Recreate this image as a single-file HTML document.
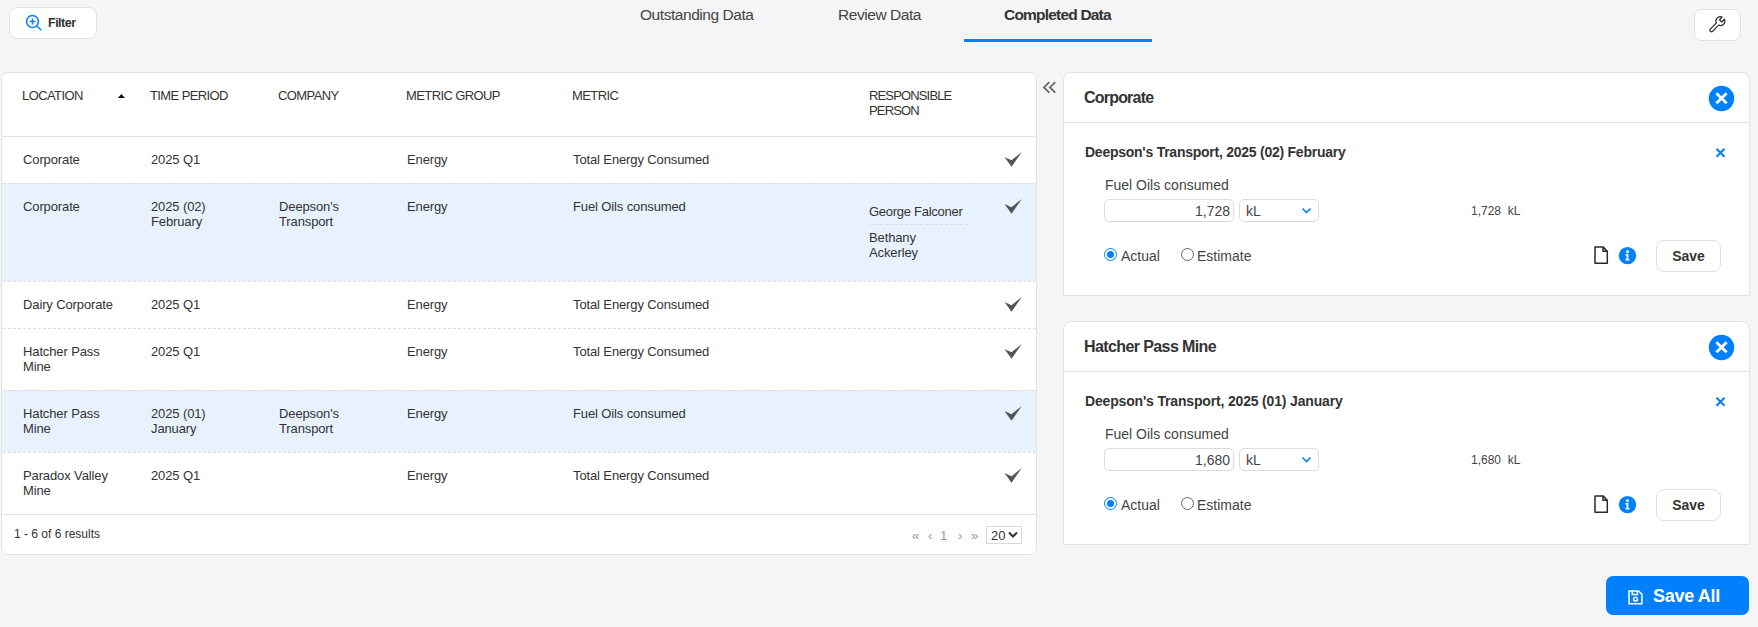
<!DOCTYPE html>
<html><head><meta charset="utf-8">
<style>
*{box-sizing:border-box;margin:0;padding:0}
html,body{width:1758px;height:627px;overflow:hidden;background:#f5f5f5;font-family:"Liberation Sans",sans-serif;color:#333;}
.abs{position:absolute}
.btn-w{position:absolute;background:#fff;border:1px solid #e2e2e2;border-radius:8px}
.tab{position:absolute;font-size:15.5px;line-height:16px;color:#444;white-space:nowrap;letter-spacing:-0.45px}
.card{position:absolute;background:#fff;border:1px solid #e3e3e3}
.th{position:absolute;font-size:13px;line-height:15px;color:#333;white-space:nowrap;letter-spacing:-0.6px}
.td{position:absolute;font-size:13px;line-height:15px;color:#333;white-space:nowrap;letter-spacing:-0.12px}
.dash{background-image:linear-gradient(to right,#dedede 3px,transparent 3px);background-size:5px 1px;background-position:1px 0}
.pg{position:absolute;font-size:13px;line-height:15px;color:#999}
.pcard{position:absolute;left:1063px;width:687px;height:224px;background:#fff;border:1px solid #e3e3e3;border-radius:8px 8px 0 0}
.ptitle{position:absolute;left:1084px;font-size:16px;line-height:18px;font-weight:bold;letter-spacing:-0.8px;color:#333;white-space:nowrap}
.sub{position:absolute;left:1085px;font-size:14px;line-height:16px;font-weight:bold;letter-spacing:-0.25px;color:#333;white-space:nowrap}
.lbl{position:absolute;left:1105px;font-size:14px;line-height:16px;color:#444;white-space:nowrap}
.inp{position:absolute;left:1104px;width:130px;height:23px;border:1px solid #dcdcdc;border-radius:5px;font-size:14px;line-height:23px;text-align:right;padding-right:3px;color:#444;background:#fff}
.sel{position:absolute;left:1239px;width:80px;height:23px;border:1px solid #dcdcdc;border-radius:5px;font-size:14px;line-height:23px;padding-left:6px;color:#444;background:#fff}
.val{position:absolute;left:1471px;font-size:12px;line-height:14px;color:#444;white-space:nowrap}
.radio{position:absolute;width:13px;height:13px;border-radius:50%;background:#fff}
.rlbl{position:absolute;font-size:14px;line-height:16px;color:#444;white-space:nowrap}
.save{position:absolute;left:1656px;width:65px;height:32px;border:1px solid #e0e0e0;border-radius:8px;font-size:14px;font-weight:bold;line-height:30px;text-align:center;color:#333;background:#fff}

</style></head>
<body>
<div class="btn-w" style="left:9px;top:7px;width:88px;height:32px"></div>
<svg class="abs" style="left:25px;top:14px" width="18" height="18" viewBox="0 0 18 18"><circle cx="7.5" cy="7.5" r="5.9" fill="none" stroke="#0080ff" stroke-width="1.5"/><path d="M7.5 4.6v5.8M4.6 7.5h5.8M11.7 11.7l4.6 4.6" stroke="#0080ff" stroke-width="1.5" fill="none"/></svg>
<div class="abs" style="left:48px;top:16px;font-size:12.5px;line-height:14px;font-weight:bold;color:#333;letter-spacing:-0.5px">Filter</div>
<div class="tab" style="left:640px;top:7px">Outstanding Data</div>
<div class="tab" style="left:838px;top:7px">Review Data</div>
<div class="tab" style="left:1004px;top:7px;font-weight:bold;color:#333;letter-spacing:-0.8px">Completed Data</div>
<div class="abs" style="left:964px;top:39px;width:188px;height:3px;background:#0080ff"></div>
<div class="btn-w" style="left:1694px;top:9px;width:47px;height:32px"></div>
<svg class="abs" style="left:1709px;top:16px" width="18" height="18" viewBox="0 0 18 18"><path d="M1.36 13.08L7.39 6.91A4.4 4.4 0 0 1 13.12 1.05L10.54 3.70L12.82 5.93L15.41 3.29A4.4 4.4 0 0 1 9.68 9.15L3.64 15.32A1.6 1.6 0 0 1 1.36 13.08Z" fill="none" stroke="#333" stroke-width="1.3" stroke-linejoin="round"/></svg>
<div class="card" style="left:1px;top:72px;width:1036px;height:483px;border-radius:7px"></div>
<div class="abs" style="left:2px;top:136px;width:1034px;height:1px;background:#e3e3e3"></div>
<div class="abs" style="left:2px;top:514px;width:1034px;height:1px;background:#e3e3e3"></div>
<div class="th" style="left:22px;top:88px">LOCATION</div>
<svg class="abs" style="left:117px;top:93px" width="9" height="6" viewBox="0 0 9 6"><path d="M0.8 5L4.4 1L8 5z" fill="#111"/></svg>
<div class="th" style="left:150px;top:88px">TIME PERIOD</div>
<div class="th" style="left:278px;top:88px">COMPANY</div>
<div class="th" style="left:406px;top:88px">METRIC GROUP</div>
<div class="th" style="left:572px;top:88px">METRIC</div>
<div class="th" style="left:869px;top:88px;letter-spacing:-0.85px">RESPONSIBLE<br>PERSON</div>
<div class="td" style="left:23px;top:152px">Corporate</div>
<div class="td" style="left:151px;top:152px">2025 Q1</div>
<div class="td" style="left:407px;top:152px">Energy</div>
<div class="td" style="left:573px;top:152px">Total Energy Consumed</div>
<svg class="abs" style="left:1004px;top:152px" width="19" height="16" viewBox="0 0 19 16"><path d="M0.5 5L7.5 8.2L17.8 0L7.5 14.8z" fill="#555"/></svg>
<div class="abs" style="left:2px;top:183px;width:1034px;height:98px;background:#e8f2ff"></div>
<div class="abs dash" style="left:2px;top:183px;width:1034px;height:1px"></div>
<div class="td" style="left:23px;top:199px">Corporate</div>
<div class="td" style="left:151px;top:199px">2025 (02)<br>February</div>
<div class="td" style="left:279px;top:199px">Deepson&#39;s<br>Transport</div>
<div class="td" style="left:407px;top:199px">Energy</div>
<div class="td" style="left:573px;top:199px">Fuel Oils consumed</div>
<svg class="abs" style="left:1004px;top:199px" width="19" height="16" viewBox="0 0 19 16"><path d="M0.5 5L7.5 8.2L17.8 0L7.5 14.8z" fill="#555"/></svg>
<div class="abs dash" style="left:2px;top:281px;width:1034px;height:1px"></div>
<div class="td" style="left:23px;top:297px">Dairy Corporate</div>
<div class="td" style="left:151px;top:297px">2025 Q1</div>
<div class="td" style="left:407px;top:297px">Energy</div>
<div class="td" style="left:573px;top:297px">Total Energy Consumed</div>
<svg class="abs" style="left:1004px;top:297px" width="19" height="16" viewBox="0 0 19 16"><path d="M0.5 5L7.5 8.2L17.8 0L7.5 14.8z" fill="#555"/></svg>
<div class="abs dash" style="left:2px;top:328px;width:1034px;height:1px"></div>
<div class="td" style="left:23px;top:344px">Hatcher Pass<br>Mine</div>
<div class="td" style="left:151px;top:344px">2025 Q1</div>
<div class="td" style="left:407px;top:344px">Energy</div>
<div class="td" style="left:573px;top:344px">Total Energy Consumed</div>
<svg class="abs" style="left:1004px;top:344px" width="19" height="16" viewBox="0 0 19 16"><path d="M0.5 5L7.5 8.2L17.8 0L7.5 14.8z" fill="#555"/></svg>
<div class="abs" style="left:2px;top:390px;width:1034px;height:62px;background:#e8f2ff"></div>
<div class="abs dash" style="left:2px;top:390px;width:1034px;height:1px"></div>
<div class="td" style="left:23px;top:406px">Hatcher Pass<br>Mine</div>
<div class="td" style="left:151px;top:406px">2025 (01)<br>January</div>
<div class="td" style="left:279px;top:406px">Deepson&#39;s<br>Transport</div>
<div class="td" style="left:407px;top:406px">Energy</div>
<div class="td" style="left:573px;top:406px">Fuel Oils consumed</div>
<svg class="abs" style="left:1004px;top:406px" width="19" height="16" viewBox="0 0 19 16"><path d="M0.5 5L7.5 8.2L17.8 0L7.5 14.8z" fill="#555"/></svg>
<div class="abs dash" style="left:2px;top:452px;width:1034px;height:1px"></div>
<div class="td" style="left:23px;top:468px">Paradox Valley<br>Mine</div>
<div class="td" style="left:151px;top:468px">2025 Q1</div>
<div class="td" style="left:407px;top:468px">Energy</div>
<div class="td" style="left:573px;top:468px">Total Energy Consumed</div>
<svg class="abs" style="left:1004px;top:468px" width="19" height="16" viewBox="0 0 19 16"><path d="M0.5 5L7.5 8.2L17.8 0L7.5 14.8z" fill="#555"/></svg>
<div class="td" style="left:869px;top:204px;letter-spacing:-0.27px">George Falconer</div>
<div class="abs dash" style="left:869px;top:224px;width:102px;height:1px"></div>
<div class="td" style="left:869px;top:230px">Bethany<br>Ackerley</div>
<div class="abs" style="left:14px;top:527px;font-size:12px;line-height:14px;color:#333">1 - 6 of 6 results</div>
<div class="pg" style="left:912px;top:528px">&laquo;</div>
<div class="pg" style="left:928px;top:528px">&lsaquo;</div>
<div class="pg" style="left:940px;top:528px">1</div>
<div class="pg" style="left:958px;top:528px">&rsaquo;</div>
<div class="pg" style="left:971px;top:528px">&raquo;</div>
<div class="abs" style="left:986px;top:526px;width:36px;height:18px;border:1px solid #d8d8d8;background:#fff"></div>
<div class="abs" style="left:991px;top:528px;font-size:13px;line-height:15px;color:#333">20</div>
<svg class="abs" style="left:1008px;top:531px" width="10" height="8" viewBox="0 0 10 8"><path d="M1 1.5L5 5.5L9 1.5" stroke="#333" stroke-width="2" fill="none"/></svg>
<svg class="abs" style="left:1042px;top:81px" width="15" height="13" viewBox="0 0 15 13"><path d="M7.3 1.2L1.9 6.4L7.3 11.6M13.3 1.2L7.9 6.4L13.3 11.6" stroke="#666" stroke-width="1.8" fill="none"/></svg>
<div class="pcard" style="top:72px"></div>
<div class="abs" style="left:1064px;top:122px;width:685px;height:1px;background:#e3e3e3"></div>
<div class="ptitle" style="top:89px">Corporate</div>
<svg class="abs" style="left:1708px;top:85px" width="27" height="27" viewBox="0 0 27 27"><circle cx="13.5" cy="13.5" r="12.7" fill="#0080ff"/><path d="M8.4 8.2L18.6 18.2M18.6 8.2L8.4 18.2" stroke="#fff" stroke-width="2.8"/></svg>
<div class="sub" style="top:144px">Deepson&#39;s Transport, 2025 (02) February</div>
<svg class="abs" style="left:1714px;top:147px" width="13" height="12" viewBox="0 0 13 12"><path d="M2.5 1.8L10.5 9.8M10.5 1.8L2.5 9.8" stroke="#0080ff" stroke-width="2"/></svg>
<div class="lbl" style="top:177px">Fuel Oils consumed</div>
<div class="inp" style="top:199px">1,728</div>
<div class="sel" style="top:199px">kL</div>
<svg class="abs" style="left:1301px;top:207px" width="11" height="8" viewBox="0 0 11 8"><path d="M1.5 1.5L5.5 5.5L9.5 1.5" stroke="#0080ff" stroke-width="1.6" fill="none"/></svg>
<div class="val" style="top:204px">1,728&nbsp; kL</div>
<div class="radio" style="left:1104px;top:248px;border:1.5px solid #0080ff"><div style="position:absolute;left:1.5px;top:1.5px;width:7px;height:7px;border-radius:50%;background:#0080ff"></div></div>
<div class="rlbl" style="left:1121px;top:248px">Actual</div>
<div class="radio" style="left:1181px;top:248px;border:1px solid #666"></div>
<div class="rlbl" style="left:1197px;top:248px">Estimate</div>
<svg class="abs" style="left:1593px;top:245px" width="16" height="20" viewBox="0 0 16 20"><path d="M2 1.9H10L14.3 6.2V18.3H2z M10 1.9V6.2H14.3" stroke="#2a2a2a" stroke-width="1.5" fill="none" stroke-linejoin="round"/></svg>
<svg class="abs" style="left:1618px;top:246px" width="19" height="19" viewBox="0 0 19 19"><circle cx="9.5" cy="9.6" r="8.7" fill="#0080ff"/><circle cx="9.5" cy="5.7" r="1.45" fill="#fff"/><path d="M7.4 8.1H10.4V13.1H11.5V14.4H7.4V13.1H8.5V9.4H7.4z" fill="#fff"/></svg>
<div class="save" style="top:240px">Save</div>
<div class="pcard" style="top:321px"></div>
<div class="abs" style="left:1064px;top:371px;width:685px;height:1px;background:#e3e3e3"></div>
<div class="ptitle" style="top:338px"><span style="letter-spacing:-0.6px">Hatcher Pass Mine</span></div>
<svg class="abs" style="left:1708px;top:334px" width="27" height="27" viewBox="0 0 27 27"><circle cx="13.5" cy="13.5" r="12.7" fill="#0080ff"/><path d="M8.4 8.2L18.6 18.2M18.6 8.2L8.4 18.2" stroke="#fff" stroke-width="2.8"/></svg>
<div class="sub" style="top:393px"><span style="letter-spacing:-0.17px">Deepson&#39;s Transport, 2025 (01) January</span></div>
<svg class="abs" style="left:1714px;top:396px" width="13" height="12" viewBox="0 0 13 12"><path d="M2.5 1.8L10.5 9.8M10.5 1.8L2.5 9.8" stroke="#0080ff" stroke-width="2"/></svg>
<div class="lbl" style="top:426px">Fuel Oils consumed</div>
<div class="inp" style="top:448px">1,680</div>
<div class="sel" style="top:448px">kL</div>
<svg class="abs" style="left:1301px;top:456px" width="11" height="8" viewBox="0 0 11 8"><path d="M1.5 1.5L5.5 5.5L9.5 1.5" stroke="#0080ff" stroke-width="1.6" fill="none"/></svg>
<div class="val" style="top:453px">1,680&nbsp; kL</div>
<div class="radio" style="left:1104px;top:497px;border:1.5px solid #0080ff"><div style="position:absolute;left:1.5px;top:1.5px;width:7px;height:7px;border-radius:50%;background:#0080ff"></div></div>
<div class="rlbl" style="left:1121px;top:497px">Actual</div>
<div class="radio" style="left:1181px;top:497px;border:1px solid #666"></div>
<div class="rlbl" style="left:1197px;top:497px">Estimate</div>
<svg class="abs" style="left:1593px;top:494px" width="16" height="20" viewBox="0 0 16 20"><path d="M2 1.9H10L14.3 6.2V18.3H2z M10 1.9V6.2H14.3" stroke="#2a2a2a" stroke-width="1.5" fill="none" stroke-linejoin="round"/></svg>
<svg class="abs" style="left:1618px;top:495px" width="19" height="19" viewBox="0 0 19 19"><circle cx="9.5" cy="9.6" r="8.7" fill="#0080ff"/><circle cx="9.5" cy="5.7" r="1.45" fill="#fff"/><path d="M7.4 8.1H10.4V13.1H11.5V14.4H7.4V13.1H8.5V9.4H7.4z" fill="#fff"/></svg>
<div class="save" style="top:489px">Save</div>
<div class="abs" style="left:1606px;top:576px;width:143px;height:39px;border-radius:7px;background:#0080ff"></div>
<svg class="abs" style="left:1627px;top:590px" width="17" height="16" viewBox="0 0 17 16"><path d="M2 1H11.6L14.9 4.3V13.7H2z M5.2 1V4.6H10.4V1" stroke="#fff" stroke-width="1.5" fill="none"/><circle cx="8.5" cy="9.2" r="1.9" stroke="#fff" stroke-width="1.5" fill="none"/></svg>
<div class="abs" style="left:1653px;top:586px;font-size:18px;line-height:20px;font-weight:bold;color:#fff;letter-spacing:-0.3px">Save All</div>
</body></html>
